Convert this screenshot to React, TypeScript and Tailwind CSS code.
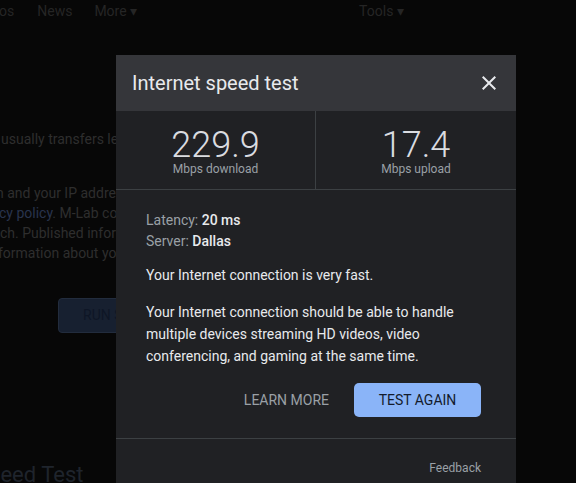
import React from "react";

function CloseIcon() {
  return (
    <svg width="24" height="24" viewBox="0 0 24 24" fill="#e8eaed">
      <path d="M19 6.41L17.59 5 12 10.59 6.41 5 5 6.41 10.59 12 5 17.59 6.41 19 12 13.41 17.59 19 19 17.59 13.41 12z" />
    </svg>
  );
}

function Stat({ value, label, border }: { value: string; label: string; border?: boolean }) {
  return (
    <div
      className={`flex flex-col items-center pt-[17px] ${border ? "border-r border-[#3c4043]" : ""}`}
    >
      <div className="text-[36px] leading-[34px] font-light text-[#dadce0]">{value}</div>
      <div className="text-[12px] leading-[14px] text-[#9aa0a6]">{label}</div>
    </div>
  );
}

export default function App() {
  return (
    <div className="relative w-[576px] h-[483px] overflow-hidden bg-[#070707] font-['Roboto',sans-serif]">
      {/* page behind the dialog, dimmed */}
      <nav className="flex items-center h-[22px] text-[14px] text-[#252525]">
        <span className="ml-[-1px]">os</span>
        <span className="ml-[23px]">News</span>
        <span className="ml-[22px]">More ▾</span>
        <span className="ml-[222px]">Tools ▾</span>
      </nav>
      <div className="text-[14px] leading-[20px] text-[#2e2e2e]">
        <div className="mt-[107px] ml-[1px]">usually transfers less than 40 MB of data</div>
        <div className="mt-[34px] ml-[-4px]">n and your IP address are</div>
        <div className="ml-[-1px]">
          <span className="text-[#29344d]">cy policy</span>. M-Lab conducts
        </div>
        <div>ch. Published information</div>
        <div className="ml-[-2px]">formation about your</div>
      </div>
      <button className="mt-[35px] ml-[58px] h-[35px] px-[24px] rounded-[4px] bg-[#172030] border border-[#222c3d] text-[14px] text-[#0e1626]">
        RUN SPEED TEST
      </button>
      <h2 className="mt-[128px] ml-[-25px] text-[22px] leading-[28px] text-[#1f242c]">Speed Test</h2>

      {/* dialog */}
      <div className="absolute left-[116px] top-[55px] w-[400px] h-[460px] bg-[#202124]">
        <div className="h-[56px] bg-[#35363a] flex items-center justify-between pl-4 pr-[15px]">
          <h1 className="text-[20px] text-[#e8eaed]">Internet speed test</h1>
          <CloseIcon />
        </div>
        <div className="grid grid-cols-2 h-[79px] border-b border-[#3c4043]">
          <Stat value="229.9" label="Mbps download" border />
          <Stat value="17.4" label="Mbps upload" />
        </div>
        <div className="pl-[30px] pr-[35px] pt-[20px] pb-[21px] text-[14px]">
          <div className="leading-[21px]">
            <div className="text-[#9aa0a6]">
              Latency: <span className="text-[#e8eaed] font-medium">20 ms</span>
            </div>
            <div className="text-[#9aa0a6]">
              Server: <span className="text-[#e8eaed] font-medium">Dallas</span>
            </div>
          </div>
          <p className="mt-[12px] leading-[22px] text-[#e8eaed]">Your Internet connection is very fast.</p>
          <p className="mt-[15px] leading-[22px] text-[#e8eaed]">
            Your Internet connection should be able to handle multiple devices streaming HD videos, video
            conferencing, and gaming at the same time.
          </p>
          <div className="mt-[16px] flex justify-end items-center gap-[9px]">
            <button className="h-[34px] px-4 text-[14px] text-[#9aa0a6]">LEARN MORE</button>
            <button className="h-[34px] w-[127px] rounded-[5px] bg-[#8ab4f8] text-[14px] text-[#131b2c]">
              TEST AGAIN
            </button>
          </div>
        </div>
        <div className="border-t border-[#3c4043] pr-[35px] pt-[21px] flex justify-end">
          <span className="text-[12px] leading-[16px] text-[#9aa0a6]">Feedback</span>
        </div>
      </div>
    </div>
  );
}
